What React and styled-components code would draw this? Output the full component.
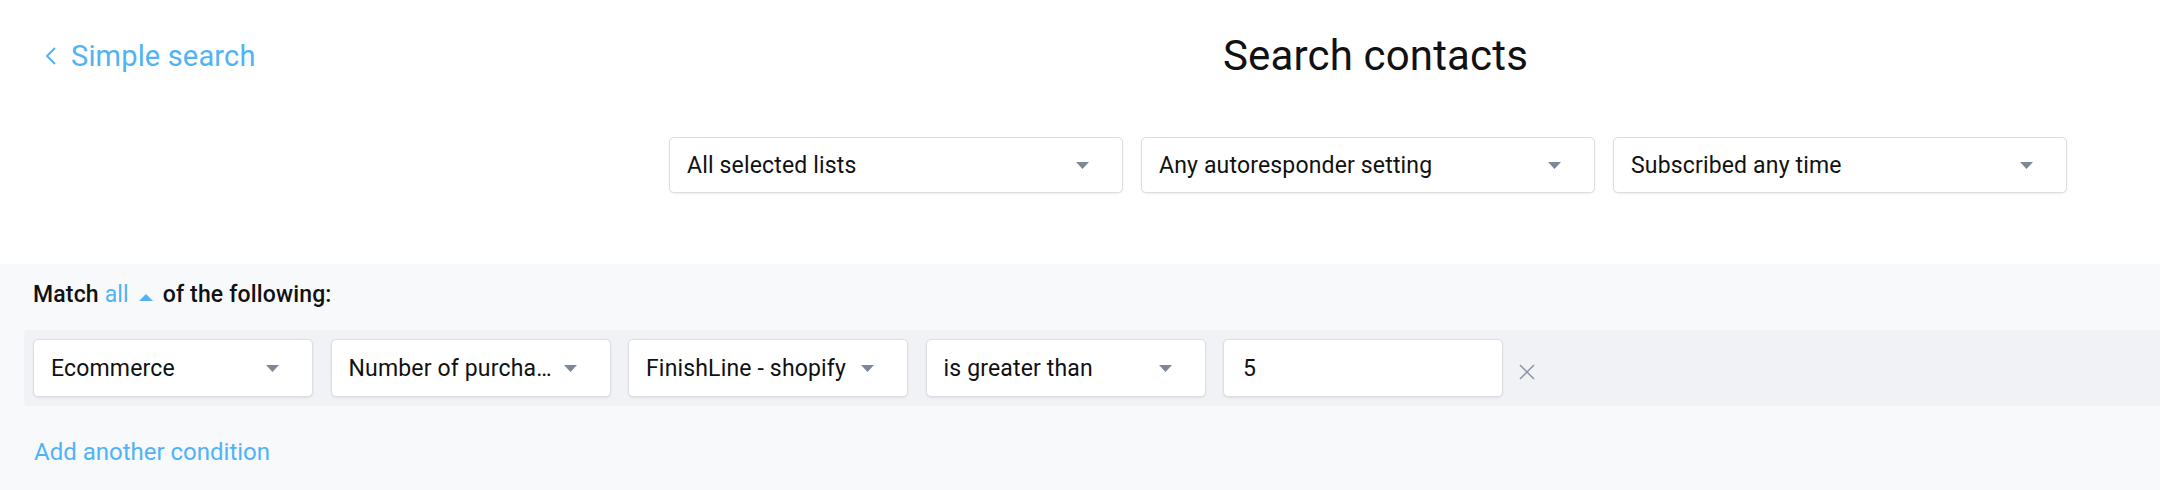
import styled, { createGlobalStyle } from "styled-components";

const GlobalStyle = createGlobalStyle`
  * {
    box-sizing: border-box;
  }
  body {
    margin: 0;
    background: #fff;
    font-family: Roboto, "Liberation Sans", sans-serif;
    letter-spacing: 0.01em;
    color: #111;
  }
`;

const BLUE = "#4fb3f5";

const Page = styled.div`
  width: 2160px;
  height: 490px;
  overflow: hidden;
  display: flex;
  flex-direction: column;
`;

const Header = styled.header`
  display: grid;
  grid-template-columns: 669px 1399px;
  padding: 31px 0 71px;
`;

const BackLink = styled.a`
  display: flex;
  align-items: center;
  align-self: start;
  gap: 15px;
  margin: 8px 0 0 45px;
  font-size: 29px;
  line-height: 34px;
  color: ${BLUE};
  text-decoration: none;
  cursor: pointer;
`;

const Main = styled.div`
  display: flex;
  flex-direction: column;
`;

const Title = styled.h1`
  margin: 0 0 57px;
  padding-left: 14px;
  text-align: center;
  font-size: 42px;
  line-height: 49px;
  font-weight: 400;
  color: #111;
`;

const FilterRow = styled.div`
  display: grid;
  grid-template-columns: repeat(3, 454px);
  gap: 18px;
`;

const Select = styled.div`
  display: flex;
  align-items: center;
  width: ${(p) => p.$w || "auto"};
  height: ${(p) => p.$h}px;
  padding: 0 33px 0 17px;
  background: #fff;
  border: 1px solid #dcdee2;
  border-radius: 5px;
  box-shadow: 0 1px 2px rgba(0, 0, 0, 0.08);
  font-size: 23px;
  color: #111;
  flex-shrink: 0;
`;

const SelectText = styled.span`
  flex: 1;
  min-width: 0;
  margin-right: 7px;
  overflow: hidden;
  white-space: nowrap;
  text-overflow: ellipsis;
`;

const Input = styled(Select)`
  padding: 0 19px;
`;

const Conditions = styled.section`
  flex: 1;
  background: #f8f9fb;
  padding: 17px 0 0 24px;
`;

const MatchLine = styled.div`
  padding-left: 9px;
  font-size: 23px;
  line-height: 27px;
  font-weight: 500;
  color: #111;
`;

const Toggle = styled.span`
  display: inline-flex;
  align-items: center;
  gap: 10px;
  margin-right: 4px;
  color: ${BLUE};
  font-weight: 400;
  cursor: pointer;

  svg {
    margin-top: 5px;
  }
`;

const ConditionRow = styled.div`
  display: flex;
  align-items: center;
  gap: 17.5px;
  margin-top: 22px;
  padding: 9px;
  background: #f0f2f5;
  border-radius: 4px 0 0 4px;
`;

const Remove = styled.button`
  display: flex;
  padding: 0;
  margin: 8px 0 0 -2px;
  border: 0;
  background: none;
  cursor: pointer;
`;

const AddLink = styled.a`
  display: block;
  margin-top: 32px;
  padding-left: 10px;
  font-size: 24px;
  line-height: 28px;
  letter-spacing: 0;
  color: ${BLUE};
  cursor: pointer;
`;

function Caret() {
  return (
    <svg width="13" height="7" viewBox="0 0 13 7">
      <polygon points="0,0 13,0 6.5,7" fill="#7c8898" />
    </svg>
  );
}

function Dropdown({ label, h, w }) {
  return (
    <Select $h={h} $w={w}>
      <SelectText>{label}</SelectText>
      <Caret />
    </Select>
  );
}

const conditions = [
  "Ecommerce",
  "Number of purchases",
  "FinishLine - shopify",
  "is greater than",
];

export default function App() {
  return (
    <Page>
      <GlobalStyle />
      <Header>
        <BackLink>
          <svg width="11" height="18" viewBox="0 0 11 18">
            <polyline
              points="10,1 2,9 10,17"
              fill="none"
              stroke={BLUE}
              strokeWidth="2"
            />
          </svg>
          Simple search
        </BackLink>
        <Main>
          <Title>Search contacts</Title>
          <FilterRow>
            <Dropdown label="All selected lists" h={56} />
            <Dropdown label="Any autoresponder setting" h={56} />
            <Dropdown label="Subscribed any time" h={56} />
          </FilterRow>
        </Main>
      </Header>
      <Conditions>
        <MatchLine>
          Match{" "}
          <Toggle>
            all
            <svg width="14" height="7" viewBox="0 0 14 7">
              <polygon points="0,7 14,7 7,0" fill={BLUE} />
            </svg>
          </Toggle>{" "}
          of the following:
        </MatchLine>
        <ConditionRow>
          {conditions.map((c) => (
            <Dropdown key={c} label={c} h={58} w="280px" />
          ))}
          <Input $h={58} $w="280px">5</Input>
          <Remove aria-label="Remove condition">
            <svg width="16" height="16" viewBox="0 0 16 16">
              <path
                d="M1 1 L15 15 M15 1 L1 15"
                stroke="#8a94a4"
                strokeWidth="1.5"
              />
            </svg>
          </Remove>
        </ConditionRow>
        <AddLink>Add another condition</AddLink>
      </Conditions>
    </Page>
  );
}
